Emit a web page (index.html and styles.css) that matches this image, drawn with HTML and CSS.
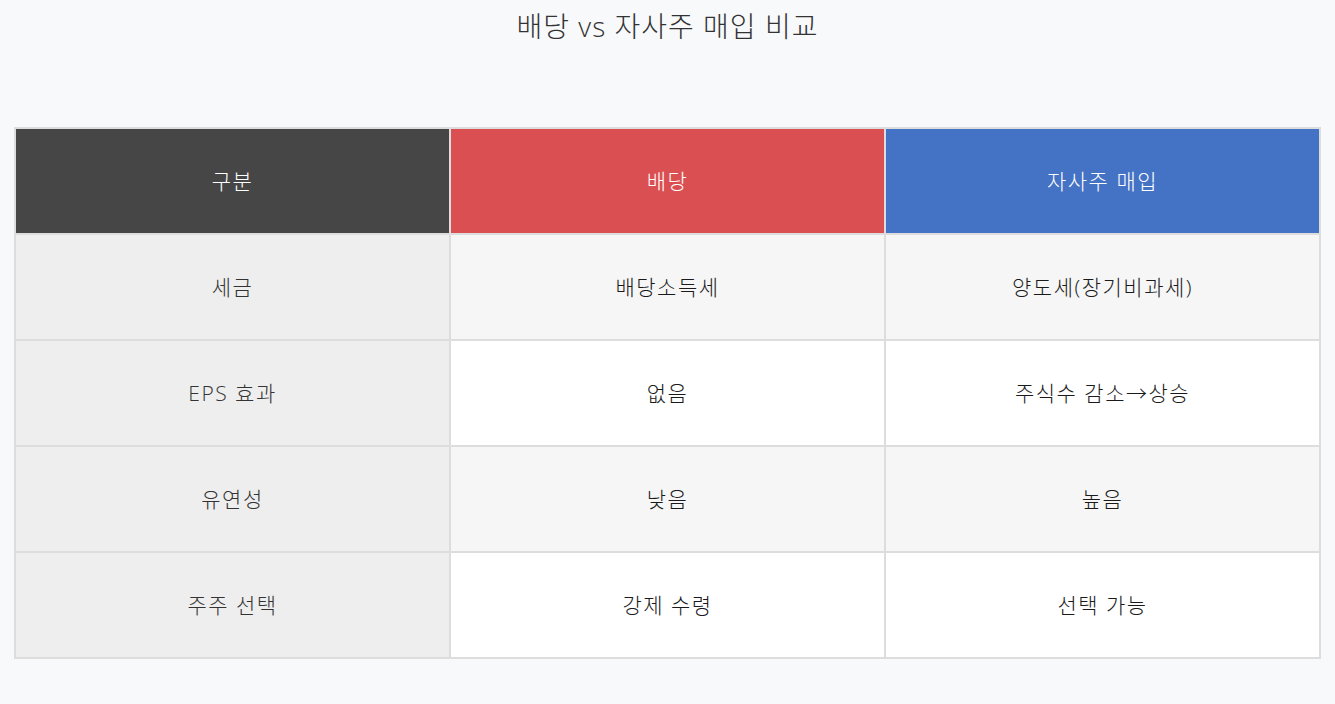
FILE: index.html
```html
<!DOCTYPE html>
<html lang="ko">
<head>
<meta charset="utf-8">
<title>배당 vs 자사주 매입 비교</title>
<link rel="stylesheet" href="styles.css">
</head>
<body>
<h1 class="title">배당 vs 자사주 매입 비교</h1>
<table class="cmp">
  <thead>
    <tr>
      <th class="h-dark">구분</th>
      <th class="h-red">배당</th>
      <th class="h-blue">자사주 매입</th>
    </tr>
  </thead>
  <tbody>
    <tr class="alt">
      <td class="label">세금</td>
      <td>배당소득세</td>
      <td>양도세(장기비과세)</td>
    </tr>
    <tr>
      <td class="label">EPS 효과</td>
      <td>없음</td>
      <td>주식수 감소→상승</td>
    </tr>
    <tr class="alt">
      <td class="label">유연성</td>
      <td>낮음</td>
      <td>높음</td>
    </tr>
    <tr>
      <td class="label">주주 선택</td>
      <td>강제 수령</td>
      <td>선택 가능</td>
    </tr>
  </tbody>
</table>
</body>
</html>
```

FILE: styles.css
```css
html, body {
  margin: 0;
  padding: 0;
}
body {
  background: #f8f9fb;
  font-family: "Open Sans", "Noto Sans CJK KR", sans-serif;
  padding: 0 14px;
}
.title {
  margin: 5px 0 0;
  font-size: 28px;
  line-height: 42px;
  font-weight: 300;
  letter-spacing: 1px;
  color: #333;
  text-align: center;
}
.cmp {
  width: 100%;
  margin-top: 80px;
  border-collapse: collapse;
  border: 2px solid #dddddd;
  table-layout: fixed;
}
.cmp th, .cmp td {
  border: 2px solid #dddddd;
  text-align: center;
  padding: 40px 0;
  line-height: 24px;
  font-size: 21px;
  font-weight: 300;
  letter-spacing: 1.5px;
}
.cmp th {
  color: #ffffff;
}
.h-dark { background: #464646; }
.h-red { background: #da5052; }
.h-blue { background: #4472c4; }
.cmp td {
  background: #ffffff;
  color: #1a1a1a;
}
.cmp tr.alt td {
  background: #f6f6f6;
}
.cmp td.label,
.cmp tr.alt td.label {
  background: #eeeeee;
  color: #333;
}
```
